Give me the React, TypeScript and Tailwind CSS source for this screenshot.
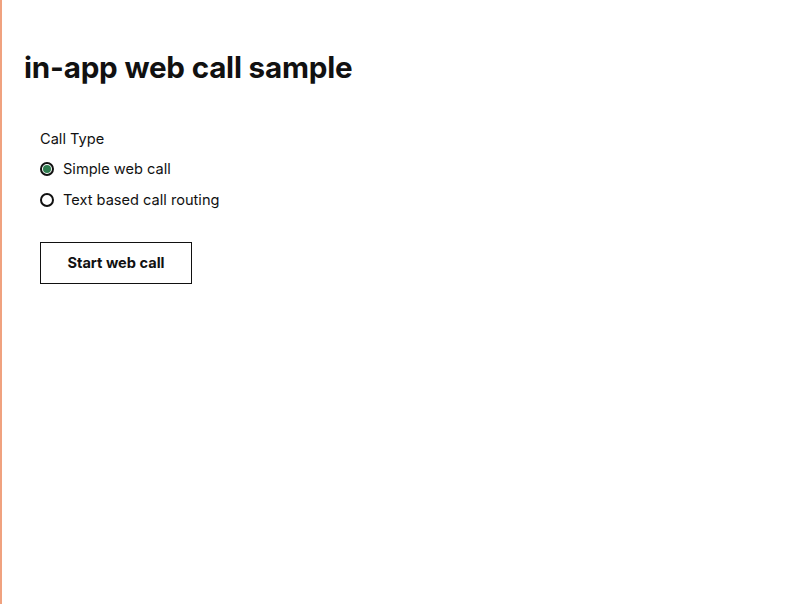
import React, { useState } from "react";

const callTypes = [
  { id: "simple", label: "Simple web call" },
  { id: "text", label: "Text based call routing" },
];

const App = () => {
  const [callType, setCallType] = useState("simple");

  return (
    <div className="min-h-screen bg-white border-l-2 border-[#f0a27f] font-['Inter','Liberation_Sans',sans-serif] text-[#111]">
      <div className="px-[22px] pt-[49px]">
        <h1 className="text-[29.6px] font-bold leading-[36px] tracking-[-0.2px]">in-app web call sample</h1>

        <div className="pl-4 pt-[44px]">
          <div className="text-[14.6px] leading-5 mb-[10px]">Call Type</div>
          <div className="flex flex-col gap-[11px]">
            {callTypes.map((t) => (
              <label key={t.id} className="flex items-center gap-[9px] text-[14.6px] leading-5 cursor-pointer">
                <span className="w-[14px] h-[14px] rounded-full border-2 border-[#111] flex items-center justify-center">
                  {callType === t.id && <span className="w-[8px] h-[8px] rounded-full bg-[#2e7d4f]" />}
                </span>
                <input
                  type="radio"
                  name="callType"
                  className="hidden"
                  checked={callType === t.id}
                  onChange={() => setCallType(t.id)}
                />
                {t.label}
              </label>
            ))}
          </div>

          <button className="mt-[32px] w-[152px] h-[42px] pt-[2px] border-[1.5px] border-[#111] text-[14.6px] font-bold">
            Start web call
          </button>
        </div>
      </div>
    </div>
  );
};

export default App;
